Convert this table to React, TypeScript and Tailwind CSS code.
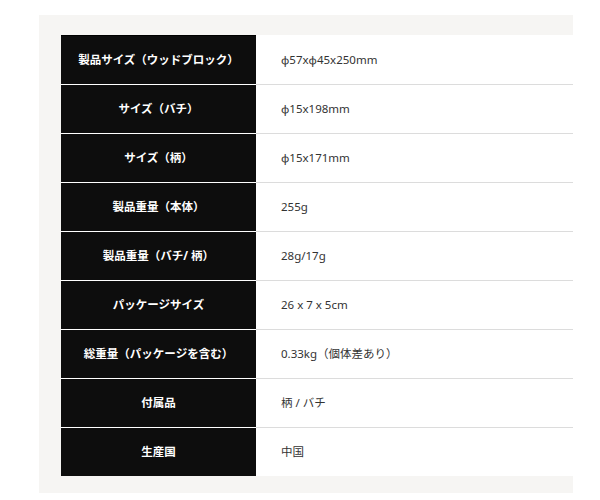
const specs = [
  { label: "製品サイズ（ウッドブロック）", value: "φ57xφ45x250mm" },
  { label: "サイズ（バチ）", value: "φ15x198mm" },
  { label: "サイズ（柄）", value: "φ15x171mm" },
  { label: "製品重量（本体）", value: "255g" },
  { label: "製品重量（バチ/ 柄）", value: "28g/17g" },
  { label: "パッケージサイズ", value: "26 x 7 x 5cm" },
  { label: "総重量（パッケージを含む）", value: "0.33kg（個体差あり）" },
  { label: "付属品", value: "柄 / バチ" },
  { label: "生産国", value: "中国" },
];

export default function App() {
  return (
    <div
      className="w-[600px] h-[500px] bg-white pt-[15px] pl-[39px]"
      style={{ fontFamily: '"Noto Sans", "Noto Sans CJK JP", sans-serif' }}
    >
      <div className="w-[534px] h-[478px] bg-[#f6f5f3] pt-[20px] pl-[22px]">
        <div className="flex flex-col">
          {specs.map((row, i) => (
            <div key={row.label} className="flex h-[49px]">
              <div
                className={`w-[195px] shrink-0 flex items-center justify-center bg-[#0d0d0d] text-white text-[11.5px] font-bold border-t ${
                  i > 0 ? "border-white" : "border-black"
                }`}
              >
                {row.label}
              </div>
              <div
                className={`flex-1 flex items-center bg-white text-[#333] text-[11.5px] pl-[25px] border-t ${
                  i > 0 ? "border-[#dcdcdc]" : "border-white"
                }`}
              >
                {row.value}
              </div>
            </div>
          ))}
        </div>
      </div>
    </div>
  );
}
